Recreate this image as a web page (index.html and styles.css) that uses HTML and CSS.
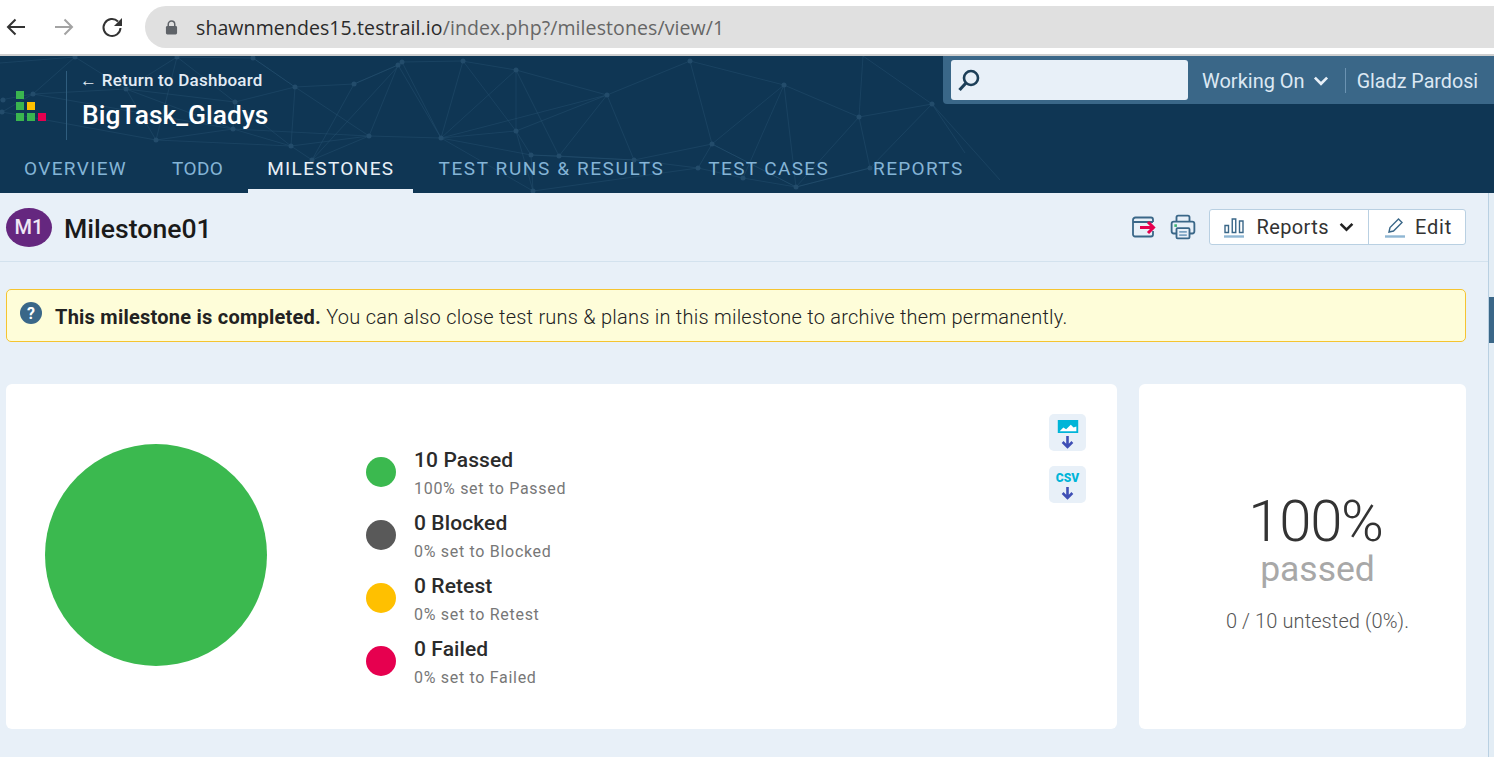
FILE: index.html
```html
<!DOCTYPE html>
<html>

<head>
	<title>Milestone01</title>
	<link rel="stylesheet" href="styles.css">
</head>

<body>
	<div class="browser-bar">
		<svg class="nav-icon" viewBox="0 0 24 24"><path d="M21 12H4M11.5 4.5 4 12l7.5 7.5" fill="none" stroke="#333" stroke-width="2"/></svg>
		<svg class="nav-icon" viewBox="0 0 24 24"><path d="M3 12h17M12.500 4.500 20 12l-7.500 7.500" fill="none" stroke="#a3a3a3" stroke-width="2"/></svg>
		<svg class="nav-icon" viewBox="0 0 24 24"><path d="M20.500 13a8.500 8.500 0 1 1-2.500-6.500" fill="none" stroke="#333" stroke-width="2"/><path d="M22 3v8h-8z" fill="#333"/></svg>
		<div class="omnibox">
			<svg class="lock" viewBox="0 0 14 16"><path d="M3.500 7V4.500a3.500 3.500 0 0 1 7 0V7" fill="none" stroke="#5f6368" stroke-width="1.600"/><rect x="1" y="6.500" width="12" height="9" rx="1.500" fill="#5f6368"/></svg>
			<span class="url">shawnmendes15.testrail.io<span class="url-path">/index.php?/milestones/view/1</span></span>
		</div>
	</div>

	<header class="header">
		<svg class="network" viewBox="0 0 1494 137" width="1494" height="137">
			<g transform="translate(0,-56)">
				<path class="net-lines" d="M0 63 75 57 126 89 177 57 253 58 295 87 354 84 398 65 402 62 462 61 516 70 607 95 690 61 784 85 859 117 932 104 965 153M75 57 33 94 0 100M177 57 235 102 291 146 312 160 369 136 441 138 516 131 607 95 559 156 531 155 441 138 463 61 516 131 531 155 533 191 516 131 516 70 559 156M253 58 295 87 235 102 233 129 291 146 295 87 369 136 398 65 441 138 402 62 312 160 354 84 398 65M2 112 33 94 126 89 235 102M2 112 156 140 233 129 126 89 156 140 291 146M33 94 233 129 369 136 291 146M607 95 634 160 712 144 784 85 743 178 698 168 712 144 690 61M784 85 796 187 712 144 796 187 743 178M859 117 796 187 870 168 932 104M859 117 870 168 796 187M863 56 859 117M863 56 932 104M559 156 634 160 698 168 533 191 441 138M531 155 634 160M441 138 607 95M516 70 441 138M177 57 156 140M932 104 1000 180"/>
				<g class="net-nodes">
					<circle cx="75" cy="57" r="2.500"/><circle cx="177" cy="57" r="2.500"/><circle cx="253" cy="58" r="2.500"/>
					<circle cx="398" cy="65" r="2.500"/><circle cx="402" cy="62" r="2.500"/><circle cx="463" cy="61" r="2.500"/>
					<circle cx="295" cy="87" r="2.500"/><circle cx="354" cy="84" r="2.500"/><circle cx="235" cy="102" r="2.500"/>
					<circle cx="126" cy="89" r="2.500"/><circle cx="33" cy="94" r="2.500"/><circle cx="3" cy="100" r="2.500"/>
					<circle cx="2" cy="112" r="2.500"/><circle cx="233" cy="129" r="2.500"/><circle cx="156" cy="140" r="2.500"/>
					<circle cx="291" cy="146" r="2.500"/><circle cx="312" cy="160" r="2.500"/><circle cx="369" cy="136" r="2.500"/>
					<circle cx="441" cy="138" r="2.500"/><circle cx="516" cy="70" r="2.500"/><circle cx="607" cy="95" r="2.500"/>
					<circle cx="690" cy="61" r="2.500"/><circle cx="784" cy="85" r="2.500"/><circle cx="859" cy="117" r="2.500"/>
					<circle cx="932" cy="104" r="2.500"/><circle cx="516" cy="131" r="2.500"/><circle cx="531" cy="155" r="2.500"/>
					<circle cx="559" cy="156" r="2.500"/><circle cx="634" cy="160" r="2.500"/><circle cx="712" cy="144" r="2.500"/>
					<circle cx="698" cy="168" r="2.500"/><circle cx="743" cy="178" r="2.500"/><circle cx="796" cy="187" r="2.500"/>
					<circle cx="870" cy="168" r="2.500"/><circle cx="533" cy="191" r="2.500"/>
				</g>
			</g>
		</svg>

		<div class="header-top">
			<div class="logo">
				<div class="logo-grid">
					<i class="sq green"></i><i></i><i></i>
					<i class="sq green"></i><i class="sq yellow"></i><i></i>
					<i class="sq green"></i><i class="sq green"></i><i class="sq red"></i>
				</div>
			</div>
			<div class="project">
				<a class="back-link">← Return to Dashboard</a>
				<div class="project-name">BigTask_Gladys</div>
			</div>
			<div class="top-panel">
				<div class="search">
					<svg class="search-icon" viewBox="0 0 24 24"><circle cx="14" cy="10" r="7" fill="none" stroke="#1d3f58" stroke-width="2.600"/><path d="M9 15 2.500 22" stroke="#1d3f58" stroke-width="3.200" fill="none"/></svg>
				</div>
				<div class="panel-link">Working On
					<svg class="chevron" viewBox="0 0 14 9"><path d="M1.500 1.500 7 7l5.500-5.500" fill="none" stroke="#e8f0f8" stroke-width="2.400"/></svg>
				</div>
				<div class="panel-sep"></div>
				<div class="panel-user">Gladz Pardosi</div>
			</div>
		</div>

		<nav class="tabs">
			<a class="tab">OVERVIEW</a>
			<a class="tab tab-short">TODO</a>
			<a class="tab active">MILESTONES</a>
			<a class="tab tab-wide">TEST RUNS &amp; RESULTS</a>
			<a class="tab">TEST CASES</a>
			<a class="tab">REPORTS</a>
		</nav>
	</header>

	<div class="page">
		<main class="content">
			<div class="title-row">
				<span class="badge">M1</span>
				<h1 class="title">Milestone01</h1>
				<div class="actions">
					<svg class="action-icon" viewBox="0 0 26 22"><path d="M22 15v3.500a2 2 0 0 1-2 2H4a2 2 0 0 1-2-2V4a2.500 2.500 0 0 1 2.500-2.500H20A2 2 0 0 1 22 3.500V6M2 6h20" fill="none" stroke="#3a6788" stroke-width="1.800"/><path d="M9 11.500h12" stroke="#e6004f" stroke-width="3"/><path d="M17 6l5.500 5.500L17 17" fill="none" stroke="#e6004f" stroke-width="3"/></svg>
					<svg class="action-icon print" viewBox="0 0 24 24"><path d="M6 7V3a1.500 1.500 0 0 1 1.500-1.500h9A1.500 1.500 0 0 1 18 3v4M6 18H3.500A2 2 0 0 1 1.500 16V9a2 2 0 0 1 2-2h17a2 2 0 0 1 2 2v7a2 2 0 0 1-2 2H18" fill="none" stroke="#3a6788" stroke-width="1.700"/><rect x="6" y="13" width="12" height="9.500" rx="1" fill="#e8f0f8" stroke="#3a6788" stroke-width="1.700"/><path d="M8.500 16.500h7M8.500 19.500h7" stroke="#7ba3c2" stroke-width="1.500"/><rect x="4" y="9.500" width="2.400" height="2.400" fill="#3bb273"/></svg>
					<div class="btn-group">
						<a class="btn btn-reports">
							<svg class="btn-icon" viewBox="0 0 22 22"><path d="M2 9.500h3.500v7H2zM9.250 3h3.500v13.500h-3.500zM16.500 5h3.500v11.500h-3.500z" fill="none" stroke="#3a6788" stroke-width="1.400"/><path d="M1 20.500h20" stroke="#8fb6d3" stroke-width="2.400"/></svg>
							Reports
							<svg class="btn-chevron" viewBox="0 0 14 9"><path d="M1.500 1.500 7 7l5.500-5.500" fill="none" stroke="#222" stroke-width="2.400"/></svg>
						</a>
						<a class="btn btn-edit">
							<svg class="btn-icon" viewBox="0 0 22 22"><path d="M5 16l1-4.500L14.500 3 18 6.500 9.500 15z" fill="none" stroke="#3a6788" stroke-width="1.400"/><path d="M1 20.500h20" stroke="#8fb6d3" stroke-width="2.400"/></svg>
							Edit
						</a>
					</div>
				</div>
			</div>

			<div class="alert">
				<svg class="alert-icon" viewBox="0 0 22 22"><circle cx="11" cy="11" r="11" fill="#3a6788"/><text class="alert-mark" x="11" y="16.500" text-anchor="middle">?</text></svg>
				<p class="alert-text"><b>This milestone is completed.</b> You can also close test runs &amp; plans in this milestone to archive them permanently.</p>
			</div>

			<div class="cards">
				<section class="card card-chart">
					<div class="pie"></div>
					<div class="legend">
						<div class="legend-item">
							<span class="dot passed"></span>
							<div class="legend-text">
								<div class="legend-title">10 Passed</div>
								<div class="legend-sub">100% set to Passed</div>
							</div>
						</div>
						<div class="legend-item">
							<span class="dot blocked"></span>
							<div class="legend-text">
								<div class="legend-title">0 Blocked</div>
								<div class="legend-sub">0% set to Blocked</div>
							</div>
						</div>
						<div class="legend-item">
							<span class="dot retest"></span>
							<div class="legend-text">
								<div class="legend-title">0 Retest</div>
								<div class="legend-sub">0% set to Retest</div>
							</div>
						</div>
						<div class="legend-item">
							<span class="dot failed"></span>
							<div class="legend-text">
								<div class="legend-title">0 Failed</div>
								<div class="legend-sub">0% set to Failed</div>
							</div>
						</div>
					</div>
					<div class="exports">
						<div class="export">
							<svg class="export-img" viewBox="0 0 22 14"><rect width="22" height="14" fill="#00b5d8"/><path d="M2 12l4-4 3 2 5-5 3 3 3-1v5z" fill="#fff"/></svg>
							<svg class="export-arrow" viewBox="0 0 12 12"><path d="M6 0v9M1.500 5.500 6 10l4.500-4.500" fill="none" stroke="#3f4fb5" stroke-width="2.400"/></svg>
						</div>
						<div class="export">
							<span class="csv">CSV</span>
							<svg class="export-arrow" viewBox="0 0 12 12"><path d="M6 0v9M1.500 5.500 6 10l4.500-4.500" fill="none" stroke="#3f4fb5" stroke-width="2.400"/></svg>
						</div>
					</div>
				</section>
				<section class="card card-summary">
					<div class="percent">100%</div>
					<div class="percent-label">passed</div>
					<div class="untested">0 / 10 untested (0%).</div>
				</section>
			</div>
		</main>
		<aside class="side-strip">
			<div class="side-handle"></div>
		</aside>
	</div>
</body>

</html>
```

FILE: styles.css
```css
* {
	box-sizing: border-box;
}

html,
body {
	margin: 0;
	height: 757px;
	overflow: hidden;
}

body {
	font-family: Roboto, Arial, sans-serif;
	background-color: #e8f0f8;
	color: #222;
}

/* browser chrome */
.browser-bar {
	display: flex;
	align-items: center;
	height: 56px;
	padding-left: 4px;
	background-color: #fff;
	border-bottom: 2px solid #cfcfcf;
}

.nav-icon {
	width: 24px;
	height: 24px;
	margin-right: 24px;
}

.nav-icon:nth-child(3) {
	margin-right: 21px;
}

.omnibox {
	display: flex;
	align-items: center;
	flex: 1;
	height: 42px;
	padding-left: 20px;
	background-color: #e0e0e0;
	border-radius: 21px 0 0 21px;
}

.lock {
	width: 13px;
	height: 15px;
	margin-right: 18px;
}

.url {
	font-family: "Open Sans", Arial, sans-serif;
	font-size: 19.500px;
	letter-spacing: 0.095px;
	color: #2a2a2a;
}

.url-path {
	color: #666;
}

/* header */
.header {
	position: relative;
	height: 137px;
	background-color: #0f3654;
	overflow: hidden;
}

.network {
	position: absolute;
	top: 0;
	left: 0;
}

.net-lines {
	fill: none;
	stroke: #2a5473;
	stroke-width: 0.700;
	opacity: 0.6;
}

.net-nodes {
	fill: #234c6b;
}

.header-top {
	position: relative;
	display: flex;
	height: 93px;
}

.logo {
	display: flex;
	align-items: center;
	width: 67px;
	height: 69px;
	margin-top: 15px;
	padding-left: 16px;
	border-right: 1px solid #2f5d7e;
}

.logo-grid {
	display: grid;
	grid-template-columns: repeat(3, 8px);
	grid-auto-rows: 8px;
	gap: 3px;
}

.sq.green {
	background-color: #3ab54f;
}

.sq.yellow {
	background-color: #ffc000;
}

.sq.red {
	background-color: #e6004f;
}

.project {
	padding: 14px 0 0 15px;
	width: 876px;
}

.back-link {
	display: block;
	margin-left: -2px;
	font-size: 17px;
	font-weight: 500;
	letter-spacing: 0.250px;
	line-height: 20px;
	color: #e3ecf5;
}

.project-name {
	margin-top: 8px;
	font-size: 26.400px;
	font-weight: 500;
	line-height: 34px;
	color: #fff;
}

.top-panel {
	display: flex;
	align-items: center;
	flex: 1;
	height: 48px;
	padding-left: 8px;
	background-color: #3a6788;
	border-bottom-left-radius: 4px;
}

.search {
	display: flex;
	align-items: center;
	width: 237px;
	height: 40px;
	padding-left: 6px;
	background-color: #e8f0f8;
	border-radius: 3px;
}

.search-icon {
	width: 24px;
	height: 24px;
}

.panel-link {
	display: flex;
	align-items: center;
	gap: 8px;
	margin-left: 14px;
	padding-top: 2px;
	font-size: 20px;
	color: #dce8f3;
}

.chevron {
	width: 16px;
	height: 10px;
}

.panel-sep {
	width: 1px;
	height: 25px;
	margin-left: 16px;
	background-color: #6b93b2;
}

.panel-user {
	margin-left: 11px;
	padding-top: 2px;
	font-size: 19.700px;
	white-space: nowrap;
	color: #dce8f3;
}

.tabs {
	position: relative;
	display: flex;
	height: 44px;
}

.tab {
	display: flex;
	align-items: center;
	height: 44px;
	padding: 0 19px 6px;
	margin-right: 6px;
	font-size: 19px;
	letter-spacing: 1.350px;
	white-space: nowrap;
	color: #84b4d6;
}

.tab:first-child {
	padding-left: 24px;
	margin-right: 7px;
}

.tab-short {
	letter-spacing: 0.350px;
}

.tab-wide {
	letter-spacing: 1.600px;
}

.tab.active {
	color: #e8f0f8;
	border-bottom: 4px solid #e8f0f8;
	padding-bottom: 2px;
}

/* page */
.page {
	display: flex;
	height: 564px;
}

.content {
	flex: 1;
	padding: 0 22px 0 6px;
}

.side-strip {
	width: 6px;
	border-left: 1px solid #b9d0e2;
	background-color: #e3edf5;
	padding-top: 104px;
}

.side-handle {
	height: 46px;
	background-color: #3a6788;
}

.title-row {
	display: flex;
	align-items: center;
	height: 69px;
	margin-left: -6px;
	margin-right: -22px;
	padding: 0 22px 0 6px;
	border-bottom: 1px solid #d3e2ee;
}

.badge {
	display: flex;
	align-items: center;
	justify-content: center;
	width: 46px;
	height: 39px;
	font-size: 20px;
	font-weight: 500;
	color: #f0e8f5;
	background-color: #65277f;
	border-radius: 50%;
}

.title {
	margin: 0 0 0 12px;
	padding-top: 2px;
	font-size: 26.600px;
	font-weight: 500;
	color: #1a1a1a;
}

.actions {
	display: flex;
	align-items: center;
	margin-left: auto;
}

.action-icon {
	width: 26px;
	height: 22px;
	margin-right: 13px;
}

.print {
	width: 26px;
	height: 26px;
}

.btn-group {
	display: flex;
	height: 36px;
	background-color: #fff;
	border: 1px solid #b9d0e2;
	border-radius: 3px;
}

.btn {
	display: flex;
	align-items: center;
	font-size: 20px;
	letter-spacing: 0.400px;
	color: #333;
}

.btn-reports {
	padding: 0 14px 0 13px;
	border-right: 1px solid #b9d0e2;
}

.btn-edit {
	padding: 0 13px 0 15px;
	letter-spacing: 0.800px;
}

.btn-icon {
	width: 22px;
	height: 22px;
	margin-right: 11px;
}

.btn-edit .btn-icon {
	margin-right: 9px;
}

.btn-chevron {
	width: 15px;
	height: 10px;
	margin-left: 10px;
}

.alert {
	display: flex;
	height: 53px;
	margin-top: 27px;
	padding: 12px 0 0 13px;
	background-color: #fefdd9;
	border: 1px solid #f5c430;
	border-radius: 5px;
}

.alert-icon {
	width: 22px;
	height: 22px;
	flex: none;
}

.alert-mark {
	font-family: Roboto, Arial, sans-serif;
	font-size: 16px;
	font-weight: 700;
	fill: #fff;
}

.alert-text {
	margin: 3px 0 0 13px;
	font-size: 20px;
	letter-spacing: 0.240px;
	line-height: 24px;
	font-weight: 300;
	color: #222;
}

.alert-text b {
	font-weight: 700;
}

.cards {
	display: flex;
	gap: 22px;
	margin-top: 42px;
}

.card {
	height: 345px;
	background-color: #fff;
	border-radius: 6px;
}

.card-chart {
	display: flex;
	width: 1111px;
	padding: 60px 31px 0 39px;
}

.pie {
	width: 222px;
	height: 222px;
	flex: none;
	background-color: #3bb94f;
	border-radius: 50%;
}

.legend {
	margin: -4px 0 0 99px;
}

.legend-item {
	display: flex;
	align-items: center;
	gap: 18px;
	height: 63px;
}

.dot {
	width: 30px;
	height: 30px;
	border-radius: 50%;
}

.dot.passed {
	background-color: #3bb94f;
}

.dot.blocked {
	background-color: #595959;
}

.dot.retest {
	background-color: #ffc000;
}

.dot.failed {
	background-color: #e6004f;
}

.legend-text {
	padding-top: 3px;
}

.legend-title {
	font-size: 21px;
	font-weight: 500;
	letter-spacing: 0.100px;
	line-height: 26px;
	color: #2b2b2b;
}

.legend-sub {
	margin-top: 6px;
	font-size: 16px;
	letter-spacing: 0.700px;
	line-height: 20px;
	color: #777;
}

.exports {
	display: flex;
	flex-direction: column;
	gap: 15px;
	margin: -30px 0 0 auto;
}

.export {
	display: flex;
	flex-direction: column;
	align-items: center;
	justify-content: center;
	width: 37px;
	height: 37px;
	padding-top: 3px;
	background-color: #e8f0f8;
	border-radius: 5px;
}

.export-img {
	width: 22px;
	height: 13px;
}

.export-arrow {
	width: 13px;
	height: 13px;
	margin-top: 3px;
}

.csv {
	font-size: 12px;
	font-weight: 900;
	line-height: 12px;
	color: #00b5d8;
}

.card-summary {
	flex: 1;
	display: flex;
	flex-direction: column;
	align-items: center;
	padding: 109px 0 0 30px;
}

.percent {
	margin-right: 4px;
	font-size: 58px;
	font-weight: 300;
	line-height: 56px;
	letter-spacing: -1.200px;
	color: #333;
}

.percent-label {
	font-size: 35.500px;
	line-height: 40px;
	color: #a8a8a8;
}

.untested {
	margin-top: 20px;
	font-size: 20px;
	font-weight: 300;
	letter-spacing: 0.100px;
	line-height: 24px;
	color: #555;
}
```
